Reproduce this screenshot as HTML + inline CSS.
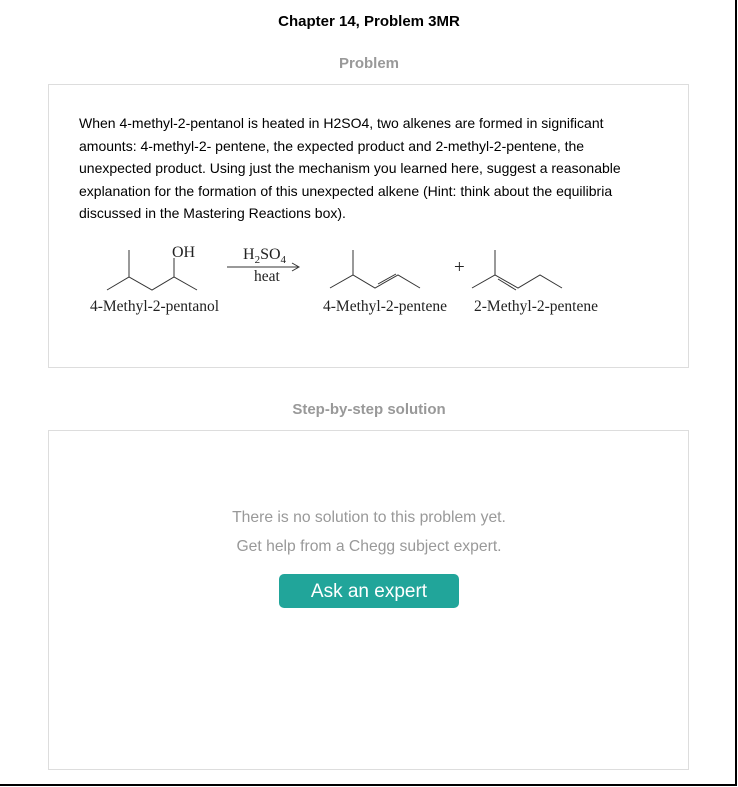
<!DOCTYPE html>
<html><head><style>
body{margin:0;width:738px;height:787px;background:#fff;font-family:"Liberation Sans",Arial,sans-serif;position:relative;overflow:hidden}
.frame{position:absolute;left:0;top:0;width:735px;height:784px;border-right:2px solid #000;border-bottom:2px solid #000}
.t{position:absolute;left:0;width:738px;text-align:center}
.box{position:absolute;left:48px;width:639px;border:1px solid #ddd}
p{position:absolute;left:79px;top:112px;margin:0;width:560px;font-size:14px;line-height:22.5px;color:#000}
.btn{position:absolute;left:279px;top:574px;width:180px;height:34px;background:#21a59a;border-radius:5px;color:#fff;font-size:19px;text-align:center;line-height:35px}
</style></head><body>
<div class="frame"></div>
<div class="t" style="top:13px;font-weight:bold;font-size:15px">Chapter 14, Problem 3MR</div>
<div class="t" style="top:55px;font-weight:bold;font-size:15px;color:#999">Problem</div>
<div class="box" style="top:84px;height:282px"></div>
<p>When 4-methyl-2-pentanol is heated in H2SO4, two alkenes are formed in significant amounts: 4-methyl-2- pentene, the expected product and 2-methyl-2-pentene, the unexpected product. Using just the mechanism you learned here, suggest a reasonable explanation for the formation of this unexpected alkene (Hint: think about the equilibria discussed in the Mastering Reactions box).</p>
<svg style="position:absolute;left:0;top:0" width="738" height="787">
<g stroke="#333" stroke-width="1" fill="none">
<polyline points="107,290 129,277 152,290 174,277 197,290"/><line x1="129" y1="277" x2="129" y2="250"/><line x1="174" y1="277" x2="174" y2="258"/>
<line x1="227" y1="267" x2="298" y2="267"/><polyline points="292,263 299,267 292,271"/>
<polyline points="330,288 353,275 375,288 398,275 420,288"/><line x1="353" y1="275" x2="353" y2="250"/><line x1="378" y1="284" x2="396" y2="274"/>
<polyline points="472,288 495,275 518,288 540,275 562,288"/><line x1="495" y1="275" x2="495" y2="250"/><line x1="498" y1="279" x2="516" y2="290"/>
</g>
<g font-family="Liberation Serif,serif" font-size="15.5" fill="#222">
<text x="172" y="257" font-size="16">OH</text>
<text x="243" y="259" font-size="16">H<tspan font-size="11" dy="4">2</tspan><tspan dy="-4">SO</tspan><tspan font-size="11" dy="4">4</tspan></text>
<text x="254" y="281">heat</text>
<text x="454" y="273" font-size="19">+</text>
<text x="90" y="311" textLength="129">4-Methyl-2-pentanol</text>
<text x="323" y="311" textLength="124">4-Methyl-2-pentene</text>
<text x="474" y="311" textLength="124">2-Methyl-2-pentene</text>
</g></svg>
<div class="t" style="top:401px;font-weight:bold;font-size:15px;color:#999">Step-by-step solution</div>
<div class="box" style="top:430px;height:338px"></div>
<div class="t" style="top:509px;font-size:15.7px;color:#999">There is no solution to this problem yet.</div>
<div class="t" style="top:538px;font-size:15.7px;color:#999">Get help from a Chegg subject expert.</div>
<div class="btn">Ask an expert</div>
</body></html>
